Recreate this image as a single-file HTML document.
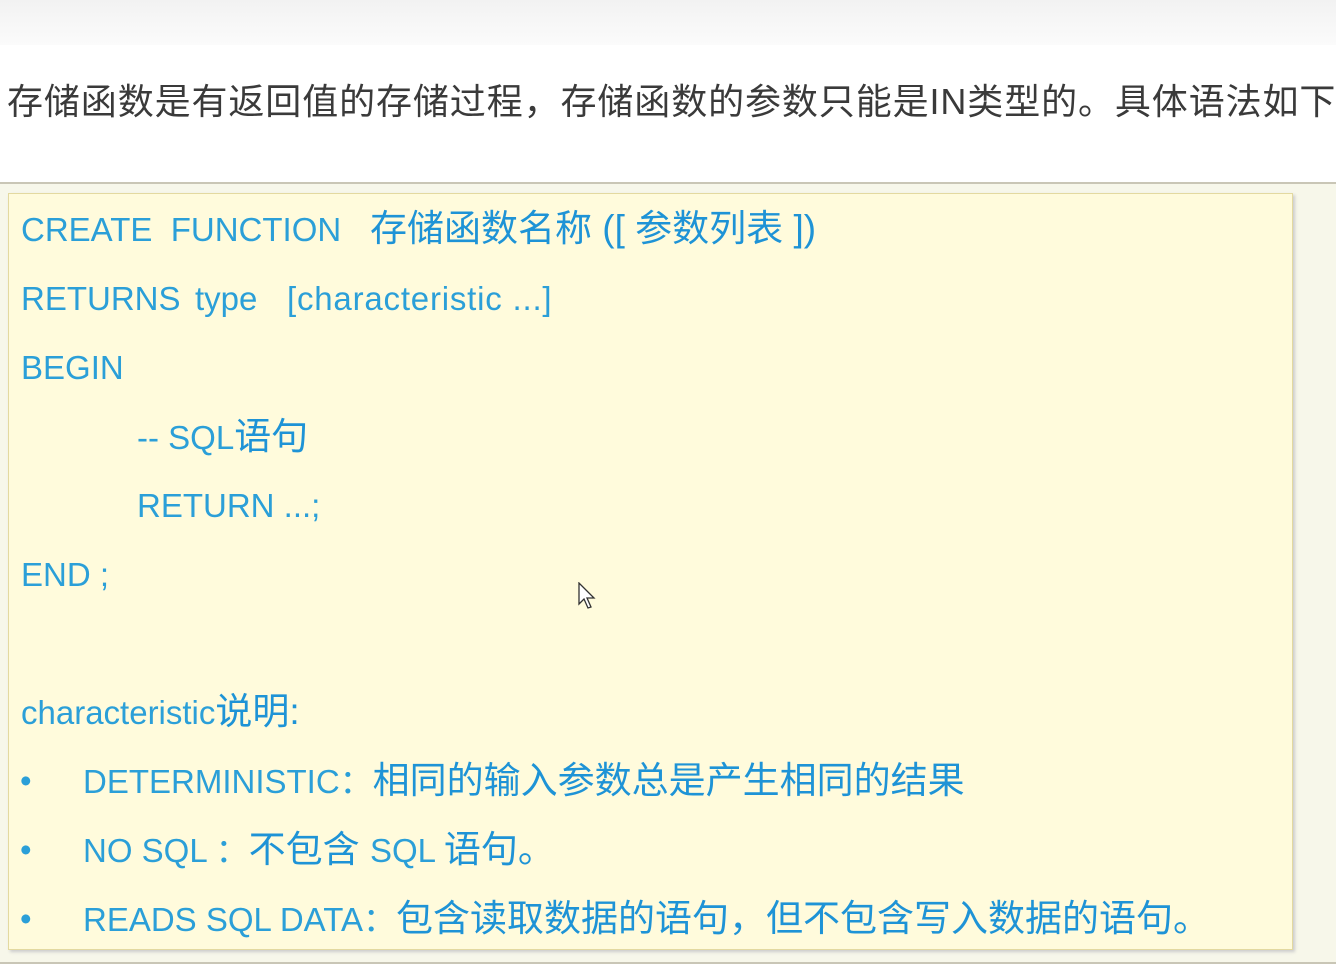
<!DOCTYPE html>
<html><head><meta charset="utf-8"><style>
body{margin:0;width:1336px;height:976px;overflow:hidden;background:#fff;position:relative;font-family:"Liberation Sans","Noto Sans CJK SC",sans-serif}
.top{position:absolute;left:0;top:0;width:1336px;height:45px;background:linear-gradient(#f2f2f2,#fbfbfb)}
.hd{position:absolute;left:7px;top:73px;font-size:36px;color:#3a3a3a;white-space:nowrap;letter-spacing:0.9px}
.outer{position:absolute;left:0;top:182px;width:1336px;height:778px;background:#f7f7ea;border-top:2px solid #c9c6b6;border-bottom:2px solid #c9c6b6}
.box{position:absolute;left:8px;top:193px;width:1283px;height:755px;background:#fffbdc;border:1px solid #e3d9a0;box-shadow:2px 2px 3px #ccc}
.l{position:absolute;font-size:33px;color:#2b9fd8;white-space:nowrap;line-height:40px;font-family:"Liberation Sans","Noto Sans CJK SC",sans-serif}
.c{color:#1e93d6;font-size:37px}
</style></head><body>
<div class="top"></div>
<div class="hd">存储函数是有返回值的存储过程，存储函数的参数只能是IN类型的。具体语法如下</div>
<div class="outer"></div>
<div class="box"></div>
<div class="l" style="left:21px;top:210px">CREATE&nbsp; FUNCTION<span class="c" style="position:absolute;left:349px;top:-1px">存储函数名称 ([ 参数列表 ])</span></div>
<div class="l" style="left:21px;top:279px">RETURNS<span style="position:absolute;left:174px">type</span><span style="position:absolute;left:266px;letter-spacing:0.8px">[characteristic ...]</span></div>
<div class="l" style="left:21px;top:348px">BEGIN</div>
<div class="l" style="left:137px;top:417px">-- SQL<span class="c">语句</span></div>
<div class="l" style="left:137px;top:486px">RETURN ...;</div>
<div class="l" style="left:21px;top:555px">END ;</div>
<div class="l" style="left:21px;top:692px">characteristic<span class="c">说明:</span></div>
<div class="l" style="left:20px;top:761px">•<span style="position:absolute;left:63px">DETERMINISTIC：<span class="c">相同的输入参数总是产生相同的结果</span></span></div>
<div class="l" style="left:20px;top:830px">•<span style="position:absolute;left:63px">NO SQL ：<span class="c">不包含 </span>SQL <span class="c">语句。</span></span></div>
<div class="l" style="left:20px;top:899px">•<span style="position:absolute;left:63px">READS SQL DATA：<span class="c">包含读取数据的语句，但不包含写入数据的语句。</span></span></div>
<svg style="position:absolute;left:578px;top:582px" width="20" height="30" viewBox="0 0 20 30"><path d="M1 1 L1 22 L6 17 L10 26 L13 25 L9 16 L16 16 Z" fill="#fff" stroke="#333" stroke-width="1.3"/></svg>
</body></html>
